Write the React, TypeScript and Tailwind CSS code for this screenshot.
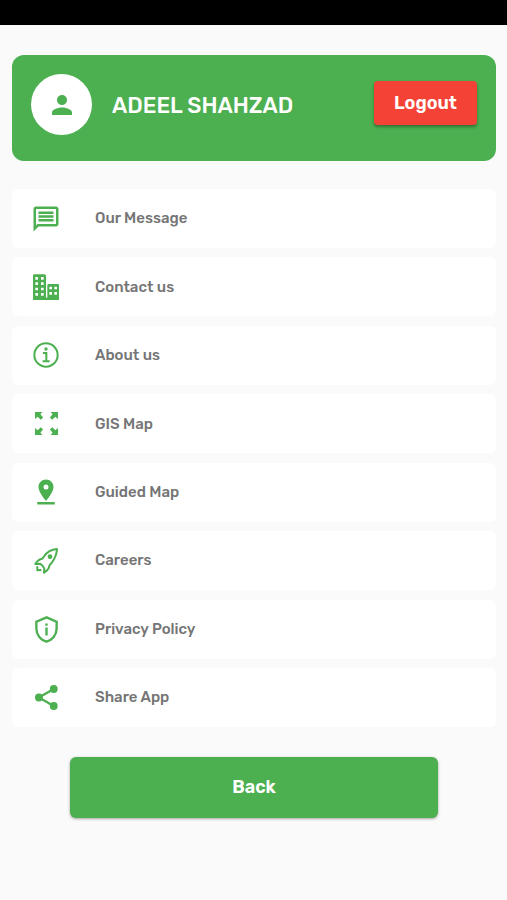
import React from 'react';
import { MdOutlineMessage, MdPerson, MdPinDrop } from 'react-icons/md';

const BuildingsIcon: React.FC = () => (
  <svg viewBox="0 0 78 78" className="w-[26px] h-[26px]" fill="currentColor" aria-hidden="true">
    <path
      fillRule="evenodd"
      d="M4 1h30q5 0 5 5v65h4V34q0-4 4-4h27q4 0 4 4v44H0V5q0-4 4-4z
        M7 9h8v8H7z M24 9h8v8h-8z M7 25h8v8H7z M24 25h8v8h-8z
        M7 41h8v8H7z M24 41h8v8h-8z M7 57h8v8H7z M24 57h8v8h-8z
        M49 38h8v8h-8z M64 38h8v8h-8z M49 54h8v8h-8z M64 54h8v8h-8z"
    />
  </svg>
);

const InfoIcon: React.FC = () => (
  <svg viewBox="0 0 78 78" className="w-[26px] h-[26px]" fill="none" stroke="currentColor" strokeWidth="6" aria-hidden="true">
    <circle cx="39" cy="39" r="35" />
    <path d="M30 33h10v25M29 58h21" />
    <circle cx="39" cy="21" r="5" fill="currentColor" stroke="none" />
  </svg>
);

const ExpandIcon: React.FC = () => (
  <svg viewBox="0 0 68 68" className="w-[23px] h-[23px]" fill="currentColor" aria-hidden="true">
    <path d="M0 0h22l-6 7 8 9-7 7-9-9-8 7z" />
    <path d="M68 0v21l-8-7-9 9-7-7 8-9-6-7z" />
    <path d="M0 68V47l8 7 9-9 7 7-8 9 6 7z" />
    <path d="M68 68H46l6-7-8-9 7-7 9 9 8-7z" />
  </svg>
);

const RocketIcon: React.FC = () => (
  <svg viewBox="0 0 72 78" className="w-[24px] h-[26px]" fill="none" stroke="currentColor" strokeWidth="6" strokeLinejoin="round" strokeLinecap="round" aria-hidden="true">
    <path d="M69 3C50 5 39 12 31 24L25 32C15 33 9 39 4 48L18 47C25 51 29 56 31 62L30 74C39 68 46 62 46 53L54 43C63 31 68 20 69 3Z" />
    <circle cx="48" cy="26" r="7" fill="currentColor" stroke="none" />
    <path d="M10 57V67L20 66" />
  </svg>
);

const ShieldInfoIcon: React.FC = () => (
  <svg viewBox="0 0 68 80" className="w-[23px] h-[27px]" fill="none" stroke="currentColor" strokeWidth="7" aria-hidden="true">
    <path d="M34 4L4 17V38C4 56 17 71 34 76C51 71 64 56 64 38V17Z" />
    <path d="M34 34v24M34 22v7" />
  </svg>
);

const ShareIcon: React.FC = () => (
  <svg viewBox="0 0 70 76" className="w-[23px] h-[25px]" fill="currentColor" aria-hidden="true">
    <path d="M57 12L12 38L57 64" fill="none" stroke="currentColor" strokeWidth="7" />
    <circle cx="57" cy="12" r="12" />
    <circle cx="12" cy="38" r="12" />
    <circle cx="57" cy="64" r="12" />
  </svg>
);

const menuItems = [
  { label: 'Our Message', icon: <MdOutlineMessage className="w-[30px] h-[30px]" /> },
  { label: 'Contact us', icon: <BuildingsIcon /> },
  { label: 'About us', icon: <InfoIcon /> },
  { label: 'GIS Map', icon: <ExpandIcon /> },
  { label: 'Guided Map', icon: <MdPinDrop className="w-[30px] h-[30px]" /> },
  { label: 'Careers', icon: <RocketIcon /> },
  { label: 'Privacy Policy', icon: <ShieldInfoIcon /> },
  { label: 'Share App', icon: <ShareIcon /> },
];

const App: React.FC = () => {
  return (
    <div className="min-h-screen bg-[#fafafa] font-['Rubik','Roboto',sans-serif]">
      {/* Status bar */}
      <div className="h-[25px] bg-black"></div>

      <div className="pl-3 pr-[11px] pt-[30px] pb-8">
        {/* Profile card */}
        <header className="flex items-start rounded-xl bg-[#4caf50] px-[19px] pt-[19px] pb-[26px] text-white">
          <div className="flex w-[61px] h-[61px] shrink-0 items-center justify-center rounded-full bg-white">
            <MdPerson className="w-[30px] h-[30px] text-[#4caf50]" />
          </div>
          <h1 className="ml-5 mt-4 flex-1 text-[22px] leading-8 font-medium">ADEEL SHAHZAD</h1>
          <button
            type="button"
            className="mt-[7px] h-11 w-[103px] rounded-[4px] bg-[#f44336] text-[18px] font-semibold shadow-[0_2px_3px_rgba(0,0,0,0.35)]"
          >
            Logout
          </button>
        </header>

        {/* Menu */}
        <nav className="mt-7">
          <ul className="flex min-h-[538px] flex-col justify-between">
            {menuItems.map((item) => (
              <li key={item.label}>
                <a href="#" className="flex h-[59px] items-center rounded-md bg-white text-[15px] font-medium text-[#757575]">
                  <span className="ml-[14px] flex w-10 justify-center text-[#4caf50]">{item.icon}</span>
                  <span className="ml-[29px]">{item.label}</span>
                </a>
              </li>
            ))}
          </ul>
        </nav>

        <div className="mt-[30px] px-[58px]">
          <button
            type="button"
            className="h-[61px] w-full rounded-md bg-[#4caf50] text-[18px] font-semibold text-white shadow-[0_1px_3px_rgba(0,0,0,0.35)]"
          >
            Back
          </button>
        </div>
      </div>
    </div>
  );
};

export default App;
